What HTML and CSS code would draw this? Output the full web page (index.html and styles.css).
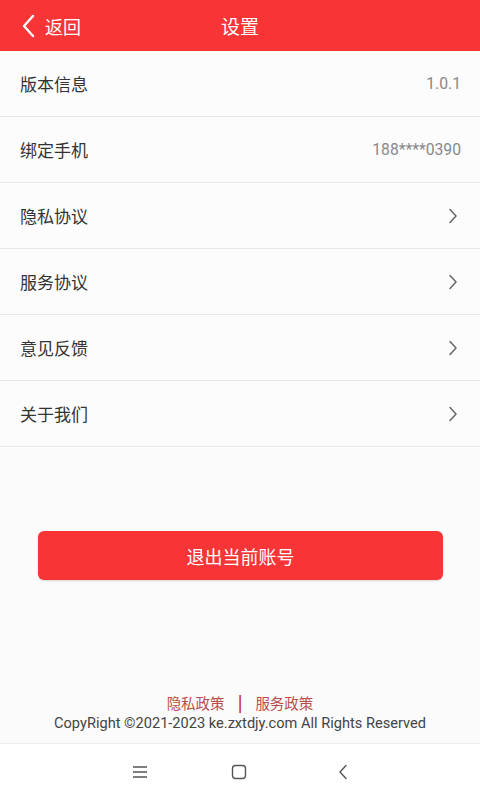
FILE: index.html
```html
<!DOCTYPE html>
<html lang="zh">
<head>
<meta charset="utf-8">
<link rel="stylesheet" href="styles.css">
</head>
<body>
<div class="page">
  <header class="topbar">
    <div class="back">
      <svg class="back-icon" width="14" height="24" viewBox="0 0 14 24"><path d="M11 2 L2 12 L11 22" fill="none" stroke="#fff" stroke-width="2.4" stroke-linecap="round" stroke-linejoin="round"/></svg>
      <span>返回</span>
    </div>
    <div class="title">设置</div>
  </header>
  <ul class="list">
    <li class="row"><span class="label">版本信息</span><span class="value">1.0.1</span></li>
    <li class="row"><span class="label">绑定手机</span><span class="value">188****0390</span></li>
    <li class="row"><span class="label">隐私协议</span><svg class="chev" width="10" height="16" viewBox="0 0 10 16"><path d="M2 1.5 L8 8 L2 14.5" fill="none" stroke="#666" stroke-width="1.5" stroke-linecap="round" stroke-linejoin="round"/></svg></li>
    <li class="row"><span class="label">服务协议</span><svg class="chev" width="10" height="16" viewBox="0 0 10 16"><path d="M2 1.5 L8 8 L2 14.5" fill="none" stroke="#666" stroke-width="1.5" stroke-linecap="round" stroke-linejoin="round"/></svg></li>
    <li class="row"><span class="label">意见反馈</span><svg class="chev" width="10" height="16" viewBox="0 0 10 16"><path d="M2 1.5 L8 8 L2 14.5" fill="none" stroke="#666" stroke-width="1.5" stroke-linecap="round" stroke-linejoin="round"/></svg></li>
    <li class="row"><span class="label">关于我们</span><svg class="chev" width="10" height="16" viewBox="0 0 10 16"><path d="M2 1.5 L8 8 L2 14.5" fill="none" stroke="#666" stroke-width="1.5" stroke-linecap="round" stroke-linejoin="round"/></svg></li>
  </ul>
  <div class="btn-wrap"><button class="logout">退出当前账号</button></div>
  <div class="spacer"></div>
  <footer class="footer">
    <div class="links"><span>隐私政策</span><span class="sep">|</span><span>服务政策</span></div>
    <div class="copy">CopyRight ©2021-2023 ke.zxtdjy.com All Rights Reserved</div>
  </footer>
  <nav class="navbar">
    <svg width="16" height="14" viewBox="0 0 16 14"><path d="M1 2 H15 M1 7 H15 M1 12 H15" stroke="#555" stroke-width="1.3"/></svg>
    <svg width="16" height="16" viewBox="0 0 16 16"><rect x="1.5" y="1.5" width="13" height="13" rx="3" fill="none" stroke="#555" stroke-width="1.4"/></svg>
    <svg width="10" height="16" viewBox="0 0 10 16"><path d="M8 1.5 L2 8 L8 14.5" fill="none" stroke="#555" stroke-width="1.4" stroke-linecap="round" stroke-linejoin="round"/></svg>
  </nav>
</div>
</body>
</html>
```
FILE: styles.css
```css
* { box-sizing: border-box; }
html, body { margin: 0; padding: 0; }
body {
  font-family: "Noto Sans CJK SC", "Noto Sans", sans-serif;
  background: #fbfbfb;
  color: #333;
}
.page {
  width: 480px;
  height: 800px;
  display: flex;
  flex-direction: column;
}
.topbar {
  height: 51px;
  background: #f83536;
  color: #fff;
  position: relative;
  display: flex;
  align-items: center;
  justify-content: center;
  flex-shrink: 0;
}
.back {
  position: absolute;
  left: 22px;
  top: 0;
  height: 51px;
  display: flex;
  align-items: center;
  gap: 9px;
  font-size: 18px;
}
.title { font-size: 19px; }
.list {
  list-style: none;
  margin: 0;
  padding: 0;
}
.row {
  height: 66px;
  border-bottom: 1px solid #e9e9e9;
  display: flex;
  align-items: center;
  justify-content: space-between;
  padding: 0 19px 0 20px;
  font-size: 17px;
  background: #fcfcfc;
}
.label { color: #333; }
.value { color: #888; font-size: 15.7px; font-family: Roboto, "Noto Sans", sans-serif; }
.chev { margin-right: 3px; }
.btn-wrap {
  padding: 84px 37px 0 38px;
}
.logout {
  width: 100%;
  height: 49px;
  border: none;
  border-radius: 6px;
  background: #f83536;
  color: #fff;
  font-family: "Noto Sans CJK SC", sans-serif;
  font-size: 18px;
  box-shadow: 0 1px 2px rgba(0,0,0,0.15);
}
.spacer { flex: 1; }
.footer {
  text-align: center;
  padding-bottom: 10px;
  border-bottom: 1px solid #ececec;
}
.links {
  color: #b94c4c;
  font-size: 14.5px;
  line-height: 20px;
}
.sep { margin: 0 13px; color: #c43a3a; font-weight: bold; font-size: 16px; }
.copy {
  color: #444;
  font-family: Roboto, "Noto Sans", sans-serif;
  font-size: 14.6px;
  line-height: 20px;
}
.navbar {
  height: 56px;
  background: #fff;
  display: flex;
  align-items: center;
  flex-shrink: 0;
}
.navbar svg:nth-child(1) { margin-left: 132px; }
.navbar svg:nth-child(2) { margin-left: 83px; }
.navbar svg:nth-child(3) { margin-left: 91px; }
```
